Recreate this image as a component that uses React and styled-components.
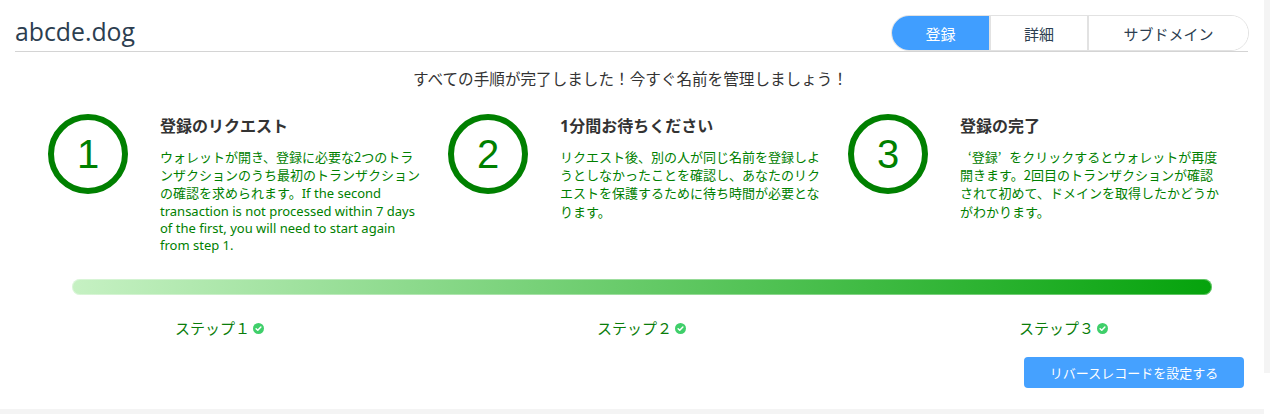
import React from 'react';
import styled, { createGlobalStyle } from 'styled-components';

const GlobalStyle = createGlobalStyle`
  html, body {
    margin: 0;
    padding: 0;
    background: #fff;
    font-family: "Noto Sans", "Noto Sans CJK JP", sans-serif;
  }
`;

const Page = styled.div`
  position: relative;
  width: 1270px;
  height: 414px;
  overflow: hidden;
  background: #fff;
`;

const Panel = styled.div`
  width: 1264px;
  height: 409px;
  border-bottom: 5px solid #f4f4f4;
  display: flex;
  flex-direction: column;
`;

const ScrollStrip = styled.div`
  position: absolute;
  top: 0;
  right: 0;
  width: 6px;
  height: 373px;
  background: #f4f4f4;
`;

const Header = styled.div`
  margin: 0 16px 0 15px;
  padding-top: 15px;
  display: flex;
  justify-content: space-between;
  align-items: flex-end;
  border-bottom: 1px solid #d4d4d4;
`;

const DomainTitle = styled.h1`
  margin: 0 0 5px;
  font-size: 24.8px;
  font-weight: 400;
  line-height: 30px;
  color: #2c3e50;
  font-family: "Open Sans", "Noto Sans", sans-serif;
`;

const Tabs = styled.div`
  display: flex;
  height: 34px;
  border: 1px solid #e2e2e2;
  border-radius: 18px;
  overflow: hidden;
  margin-right: -1px;
`;

const Tab = styled.button`
  width: ${p => p.w}px;
  border: none;
  border-left: ${p => (p.first ? 'none' : '2px solid #e2e2e2')};
  background: ${p => (p.active ? '#409eff' : '#fff')};
  color: ${p => (p.active ? '#fff' : '#2c3e50')};
  font-family: "Noto Sans CJK JP", sans-serif;
  font-size: 15px;
  padding: 0;
  cursor: pointer;
`;

const Message = styled.p`
  margin: 16px 0 0;
  text-align: center;
  font-family: "Noto Sans CJK JP", sans-serif;
  font-size: 15.6px;
  line-height: 20px;
  color: #333;
  padding-right: 3px;
`;

const StepsRow = styled.div`
  display: flex;
  padding-left: 48px;
  margin-top: 26px;
`;

const Step = styled.div`
  width: 400px;
  display: flex;
  gap: 32px;
`;

const Circle = styled.div`
  flex: none;
  width: 68px;
  height: 68px;
  border: 6px solid #008000;
  border-radius: 50%;
  display: flex;
  align-items: center;
  justify-content: center;
  font-family: "Liberation Sans", Arial, sans-serif;
  font-size: 40px;
  color: #008000;
`;

const StepText = styled.div`
  width: 262px;
  padding-top: 2px;
`;

const StepTitle = styled.h3`
  margin: 0;
  font-family: "Noto Sans", "Noto Sans CJK JP", sans-serif;
  font-size: 16px;
  font-weight: 700;
  line-height: 20px;
  color: #333;
`;

const StepDesc = styled.p`
  margin: 12px 0 0;
  font-family: "Noto Sans", "Noto Sans CJK JP", sans-serif;
  font-size: 13px;
  line-height: 17.2px;
  color: #008000;
`;

const Cjk = styled.span`
  font-family: "Noto Sans CJK JP", sans-serif;
`;

// full-width quote marks, as the reference font draws them
const Quote = styled.span`
  padding-left: ${p => (p.open ? '0.62em' : '0')};
  padding-right: ${p => (p.open ? '0' : '0.62em')};
`;

const Bar = styled.div`
  margin: 25px 0 0 72px;
  width: 1140px;
  height: 16px;
  border-radius: 8px;
  background: linear-gradient(to right, #c6f1c3, #05a30c);
  box-shadow: inset 0 0 0 1px rgba(255, 255, 255, 0.35);
`;

const Labels = styled.div`
  display: grid;
  grid-template-columns: repeat(3, 422px);
  margin: 23px 0 0 175px;
`;

const Label = styled.div`
  display: flex;
  align-items: center;
  gap: 3px;
  font-family: "Noto Sans CJK JP", sans-serif;
  font-size: 15px;
  line-height: 20px;
  color: #0a7d0a;
`;

const Footer = styled.div`
  display: flex;
  justify-content: flex-end;
  margin: 19px 20px 0 0;
`;

const ActionButton = styled.button`
  width: 220px;
  height: 31px;
  border: none;
  border-radius: 4px;
  background: #45a1ff;
  color: #fff;
  font-family: "Noto Sans CJK JP", sans-serif;
  font-size: 13px;
  cursor: pointer;
`;

const CheckIcon = () => (
  <svg width="11" height="11" viewBox="0 0 12 12">
    <circle cx="6" cy="6" r="6" fill="#3fcf6a" />
    <path d="M3.4 6.2 L5.2 7.9 L8.6 4.3" fill="none" stroke="#fff" strokeWidth="1.6" strokeLinecap="round" strokeLinejoin="round" />
  </svg>
);

const steps = [
  {
    n: 1,
    title: '登録のリクエスト',
    desc: (
      <>
        <Cjk>ウォレットが開き、登録に必要な2つのトランザクションのうち最初のトランザクションの確認を求められます。</Cjk>
        If the second transaction is not processed within 7 days of the first, you will need to start again from step 1.
      </>
    ),
  },
  {
    n: 2,
    title: '1分間お待ちください',
    desc: <Cjk>リクエスト後、別の人が同じ名前を登録しようとしなかったことを確認し、あなたのリクエストを保護するために待ち時間が必要となります。</Cjk>,
  },
  {
    n: 3,
    title: '登録の完了',
    desc: (
      <Cjk>
        <Quote open>‘登録</Quote>
        <Quote>’</Quote>をクリックするとウォレットが再度開きます。2回目のトランザクションが確認されて初めて、ドメインを取得したかどうかがわかります。
      </Cjk>
    ),
  },
];

const App = () => (
  <Page>
    <GlobalStyle />
    <Panel>
      <Header>
        <DomainTitle>abcde.dog</DomainTitle>
        <Tabs>
          <Tab first active w={97}>登録</Tab>
          <Tab w={98}>詳細</Tab>
          <Tab w={161}>サブドメイン</Tab>
        </Tabs>
      </Header>
      <Message>すべての手順が完了しました！今すぐ名前を管理しましょう！</Message>
      <StepsRow>
        {steps.map(s => (
          <Step key={s.n}>
            <Circle>{s.n}</Circle>
            <StepText>
              <StepTitle>{s.title}</StepTitle>
              <StepDesc>{s.desc}</StepDesc>
            </StepText>
          </Step>
        ))}
      </StepsRow>
      <Bar />
      <Labels>
        {['ステップ１', 'ステップ２', 'ステップ３'].map(l => (
          <Label key={l}>
            {l}
            <CheckIcon />
          </Label>
        ))}
      </Labels>
      <Footer>
        <ActionButton>リバースレコードを設定する</ActionButton>
      </Footer>
    </Panel>
    <ScrollStrip />
  </Page>
);

export default App;
